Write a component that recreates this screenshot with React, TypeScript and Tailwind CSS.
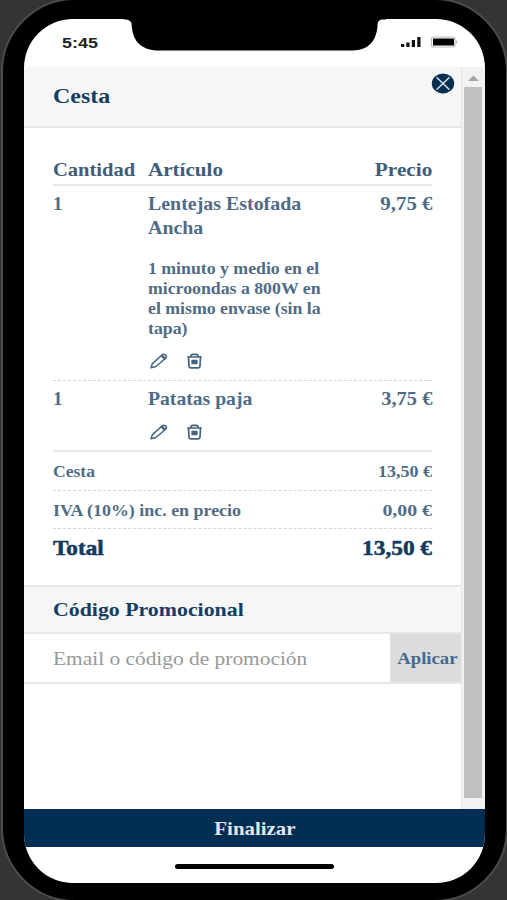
import React from "react";

function PencilIcon() {
  return (
    <svg width="18" height="16" viewBox="0 0 18 16" fill="none" stroke="#456480" strokeWidth="1.5" strokeLinejoin="round" strokeLinecap="round">
      <path d="M1 14.800 L2.4 10.6 L12 2 Q13.7 .7 15.5 1.9 Q17.2 3.4 15.8 5 L6 13.5 Z" />
      <path d="M11.2 2.9 L14.7 5.9" />
      <path d="M12.3 2.9 L14.7 4.9" strokeWidth="2" />
    </svg>
  );
}

function TrashIcon() {
  return (
    <svg width="15" height="16" viewBox="0 0 15 16" fill="none" stroke="#456480" strokeWidth="1.7" strokeLinejoin="round" strokeLinecap="round">
      <path d="M1 4 H14 M3.700 3.800 Q4 1.300 5.700 1.300 H9.300 Q11 1.300 11.300 3.800" />
      <path d="M1.500 4 L2 13 Q2.200 14.900 4 14.900 H11 Q12.800 14.900 13 13 L13.500 4" />
      <rect x="5.200" y="7.500" width="4.600" height="2.800" fill="#456480" />
    </svg>
  );
}

function Actions() {
  return (
    <div className="flex gap-[19px] pl-[2px]">
      <PencilIcon />
      <TrashIcon />
    </div>
  );
}

function StatusBar() {
  return (
    <div className="relative flex h-[48px] shrink-0 justify-between">
      <div className="pl-[38px] pt-[15px] font-['Liberation_Sans'] text-[14px] leading-[18px] font-bold text-[#222]">
        <span className="inline-block origin-left scale-x-[1.28]">5:45</span>
      </div>
      <svg className="absolute left-[100px] top-0" width="262" height="32" viewBox="0 0 262 32">
        <path d="M0 0 H262 V.5 H258 Q253.500 1 253.500 6 V8 Q251 31 229 31.500 H32 Q10 30 7.700 8 V6 Q7.500 1 2 .5 H0 Z" fill="#000" />
      </svg>
      <svg className="mr-[24px] mt-[16px]" width="62" height="14" viewBox="0 0 62 14">
        <path d="M2 9h3.200v3H2zM7.300 7.500h3.200v4.500H7.300zM12.800 5h3.200v7h-3.200zM18.300 2h3.200v10h-3.200z" fill="#111" />
        <rect x="32.500" y="2" width="23.500" height="10" rx="2" fill="#fff" stroke="#bbb" strokeWidth="1.200" />
        <rect x="34" y="3.500" width="21" height="7" fill="#000" />
        <path d="M57 5 Q60 7 57 9 Z" fill="#bbb" />
      </svg>
    </div>
  );
}

export default function App() {
  return (
    <div className="h-[900px] w-[507px] overflow-hidden bg-[#343434] pl-px font-['Liberation_Serif',serif] font-bold">
      <div className="-mt-[2px] h-[904px] w-[507px] rounded-[74px] border-2 border-[#4c4c4c] bg-black pl-[21px] pt-[19px]">
        <div className="flex h-[864px] w-[461px] flex-col overflow-hidden rounded-[49px] bg-white text-[#4f6c86]">
          <StatusBar />
          <div className="flex h-[742px] shrink-0">
            <main className="w-[438px] border-r border-[#e7e7e7]">
              <header className="flex h-[61px] justify-between border-b-2 border-[#e7e7e7] bg-[#f6f6f6] pl-[29px]">
                <h1 className="origin-left scale-x-[1.14] pt-[16px] text-[21px] leading-[26px] text-[#153d60]">Cesta</h1>
                <svg className="mt-[6px] mr-[6px]" width="24" height="22" viewBox="0 0 24 22">
                  <ellipse cx="12" cy="10.500" rx="11.200" ry="10" fill="#082f52" />
                  <path d="M6 4.800 L18 16.200 M18 4.800 L6 16.200" stroke="#d5e0e9" strokeWidth="1.500" strokeLinecap="round" />
                </svg>
              </header>
              <section className="h-[457px] px-[29px] pt-[29px]">
                <div className="flex h-[29px] border-b-2 border-[#e7e7e7] text-[19px] leading-[25px] text-[#3f5d79]">
                  <div className="w-[95px]"><span className="inline-block origin-left scale-x-[1.08]">Cantidad</span></div>
                  <div className="flex-1"><span className="inline-block origin-left scale-x-[1.11]">Artículo</span></div>
                  <div className="origin-right scale-x-[1.12]">Precio</div>
                </div>
                <div className="flex h-[195px] border-b border-dashed border-[#d6d6d6] pt-[6px] text-[19px] leading-[24px]">
                  <div className="w-[95px]">1</div>
                  <div className="flex-1">
                    <div className="w-[170px] origin-left scale-x-[1.048]">Lentejas Estofada Ancha</div>
                    <p className="mb-[14px] mt-[19px] origin-left scale-x-[1.11] whitespace-nowrap text-[16px] leading-[20px]">1 minuto y medio en el<br />microondas a 800W en<br />el mismo envase (sin la<br />tapa)</p>
                    <Actions />
                  </div>
                  <div className="h-[24px] origin-right scale-x-[1.1]">9,75 €</div>
                </div>
                <div className="flex h-[71px] border-b-2 border-[#e7e7e7] pt-[6px] text-[19px] leading-[24px]">
                  <div className="w-[95px]">1</div>
                  <div className="flex-1">
                    <div className="mb-[13px]"><span className="inline-block origin-left scale-x-[1.035]">Patatas paja</span></div>
                    <Actions />
                  </div>
                  <div className="h-[24px] origin-right scale-x-[1.08]">3,75 €</div>
                </div>
                <div className="flex h-[39px] justify-between border-b border-dashed border-[#d6d6d6] pt-[9px] text-[16px] leading-[22px]">
                  <span className="origin-left scale-x-[1.1]">Cesta</span>
                  <span className="origin-right scale-x-[1.125]">13,50 €</span>
                </div>
                <div className="flex h-[38px] justify-between border-b border-dashed border-[#d6d6d6] pt-[9px] text-[16px] leading-[22px]">
                  <span className="origin-left scale-x-[1.12]">IVA (10%) inc. en precio</span>
                  <span className="origin-right scale-x-[1.24]">0,00 €</span>
                </div>
                <div className="flex justify-between pt-[7px] text-[20px] leading-[24px] text-[#123a5d] [-webkit-text-stroke:0.5px_#123a5d]">
                  <span className="origin-left scale-x-[1.16]">Total</span>
                  <span className="origin-right scale-x-[1.165]">13,50 €</span>
                </div>
              </section>
              <h2 className="h-[49px] border-y-2 border-[#e7e7e7] bg-[#f6f6f6] pl-[29px] pt-[10px] text-[19.500px] leading-[26px] text-[#153d60]">
                <span className="inline-block origin-left scale-x-[1.12]">Código Promocional</span>
              </h2>
              <div className="flex h-[50px] border-b-2 border-[#e7e7e7]">
                <div className="flex-1 whitespace-nowrap pl-[29px] pt-[12px] text-[19.500px] leading-[26px] font-normal text-[#999]">
                  <span className="inline-block origin-left scale-x-[1.097]">Email o código de promoción</span>
                </div>
                <button className="w-[71px] bg-[#dcdcdc] pl-[3px] pt-[2px] text-[17px] text-[#426b91]">
                  <span className="inline-block scale-x-[1.1]">Aplicar</span>
                </button>
              </div>
            </main>
            <aside className="flex w-[23px] flex-col bg-[#f2f2f2] pl-[2px]">
              <svg width="18" height="20" viewBox="0 0 18 20"><path d="M4 14 L9.500 8.500 L15 14 Z" fill="#a5a5a5" /></svg>
              <div className="h-[711px] w-[18px] bg-[#c1c1c1]" />
            </aside>
          </div>
          <button className="h-[38px] shrink-0 bg-[#022e53] pt-[3px] text-[19px] text-[#e0e7ef]">
            <span className="inline-block scale-x-[1.1]">Finalizar</span>
          </button>
          <div className="flex flex-1 justify-center pt-[17px]">
            <div className="h-[5px] w-[159px] rounded-full bg-black" />
          </div>
        </div>
      </div>
    </div>
  );
}
